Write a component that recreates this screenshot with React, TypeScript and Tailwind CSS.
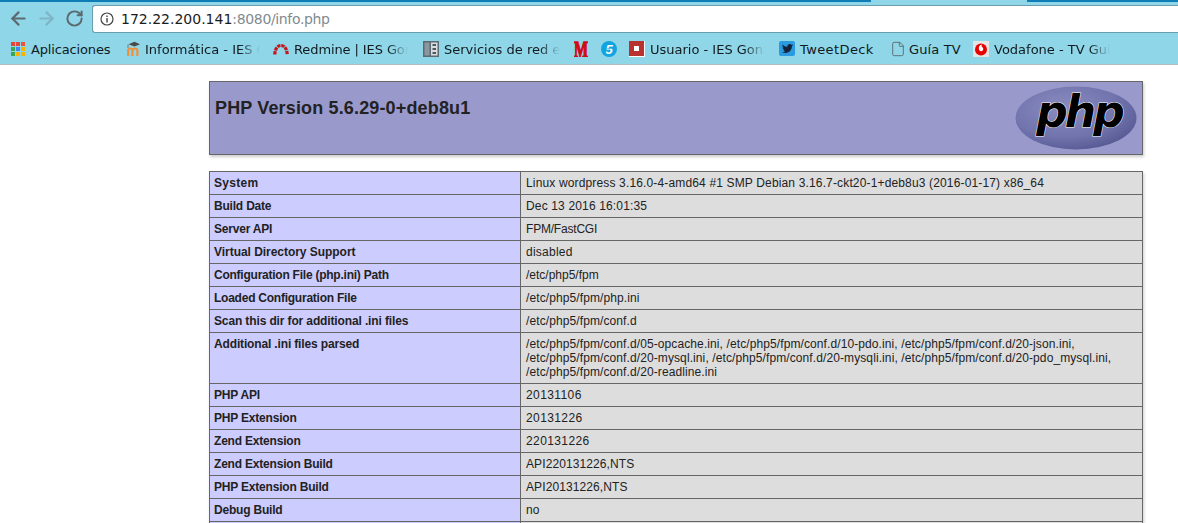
import { ArrowLeft, ArrowRight, RotateCw, File } from "lucide-react";
import { FaTwitter } from "react-icons/fa";

type Row = { label: string; lines: string[]; labelClass?: string; valueClass?: string };

// the reference text is hinted, so spacing differs a little per row
const rows: Row[] = [
  { label: "System", labelClass: "tracking-[0.3px]", valueClass: "tracking-[0.15px]", lines: ["Linux wordpress 3.16.0-4-amd64 #1 SMP Debian 3.16.7-ckt20-1+deb8u3 (2016-01-17) x86_64"] },
  { label: "Build Date", lines: ["Dec 13 2016 16:01:35"], valueClass: "tracking-[0.15px]" },
  { label: "Server API", lines: ["FPM/FastCGI"], valueClass: "tracking-[-0.2px]" },
  { label: "Virtual Directory Support", labelClass: "tracking-[-0.04px]", lines: ["disabled"], valueClass: "tracking-[0.25px]" },
  { label: "Configuration File (php.ini) Path", labelClass: "tracking-[-0.24px]", lines: ["/etc/php5/fpm"], valueClass: "tracking-[0px]" },
  { label: "Loaded Configuration File", labelClass: "tracking-[-0.24px]", lines: ["/etc/php5/fpm/php.ini"] },
  { label: "Scan this dir for additional .ini files", labelClass: "tracking-[-0.13px]", lines: ["/etc/php5/fpm/conf.d"] },
  {
    label: "Additional .ini files parsed",
    labelClass: "tracking-[-0.15px]",
    lines: [
      "/etc/php5/fpm/conf.d/05-opcache.ini, /etc/php5/fpm/conf.d/10-pdo.ini, /etc/php5/fpm/conf.d/20-json.ini,",
      "/etc/php5/fpm/conf.d/20-mysql.ini, /etc/php5/fpm/conf.d/20-mysqli.ini, /etc/php5/fpm/conf.d/20-pdo_mysql.ini,",
      "/etc/php5/fpm/conf.d/20-readline.ini",
    ],
  },
  { label: "PHP API", lines: ["20131106"], valueClass: "tracking-[0.4px]" },
  { label: "PHP Extension", lines: ["20131226"], valueClass: "tracking-[0.4px]" },
  { label: "Zend Extension", lines: ["220131226"], valueClass: "tracking-[0.4px]" },
  { label: "Zend Extension Build", lines: ["API220131226,NTS"] },
  { label: "PHP Extension Build", lines: ["API20131226,NTS"] },
  { label: "Debug Build", lines: ["no"] },
  { label: "Thread Safety", lines: ["disabled"] },
];

const fade = "overflow-hidden whitespace-nowrap pt-[2px] [mask-image:linear-gradient(to_right,black_82%,transparent)]";

function AppsIcon() {
  const colors = ["#e8453c", "#e8453c", "#e8553c", "#34a853", "#4285f4", "#f4b400", "#34a853", "#f4b400", "#f4b400"];
  return (
    <div className="grid grid-cols-3 gap-[1px] w-[14px] h-[14px] mr-[6px] shrink-0">
      {colors.map((c, i) => (
        <span key={i} className="block w-[4px] h-[4px]" style={{ backgroundColor: c }} />
      ))}
    </div>
  );
}

function MoodleIcon() {
  return (
    <svg width="16" height="16" viewBox="0 0 16 16" className="mr-[4px] shrink-0">
      <path d="M3.200 15V8M3.200 9c.8-2 3.600-2 4.200 0v6M7.400 9c.7-2 4.500-2 5 0v6" fill="none" stroke="#f0903a" strokeWidth="2.200" />
      <path d="M3.500 3.200 9.500 .8 15 3.200 9.500 5.500z" fill="#4a4a4a" />
      <path d="M3 3.500v3.500" stroke="#777" strokeWidth="1" />
    </svg>
  );
}

function RedmineIcon() {
  return (
    <svg width="16" height="16" viewBox="0 0 16 16" className="mr-[5px] shrink-0">
      <path d="M1.800 13.500C2 7.500 4.800 4.500 8 4.500s6 3 6.200 9" fill="none" stroke="#c4161c" strokeWidth="3.200" strokeDasharray="3.300 .8" />
    </svg>
  );
}

function ServersIcon() {
  return (
    <svg width="16" height="16" viewBox="0 0 16 16" className="mr-[5px] shrink-0">
      <rect x="0" y="0" width="16" height="16" fill="#5b6b72" />
      <rect x="1.500" y="1.500" width="5" height="13" fill="#8b979c" />
      <rect x="8" y="1.500" width="6.500" height="13" fill="#d8dcde" />
      <rect x="9.500" y="3" width="3.500" height="2" fill="#4c5a60" />
      <rect x="9.500" y="7" width="3.500" height="2" fill="#4c5a60" />
      <rect x="9.500" y="11" width="3.500" height="2" fill="#4c5a60" />
    </svg>
  );
}

function MarcaIcon() {
  return (
    <svg width="14" height="16" viewBox="0 0 14 16">
      <text x="0" y="16" fontFamily="Liberation Serif" fontWeight="700" fontSize="24" textLength="14" lengthAdjust="spacingAndGlyphs" fill="#d10a11" stroke="#d10a11" strokeWidth="1.300">
        M
      </text>
    </svg>
  );
}

function CincoIcon() {
  return (
    <svg width="16" height="16" viewBox="0 0 16 16">
      <circle cx="8" cy="8" r="8" fill="#12a4de" />
      <text x="8" y="12.500" textAnchor="middle" fontFamily="Liberation Sans" fontWeight="700" fontStyle="italic" fontSize="13" fill="#fff">
        5
      </text>
      <path d="M2.500 8.600 13 6.800" stroke="#12a4de" strokeWidth="0.800" />
    </svg>
  );
}

function UsuarioIcon() {
  return (
    <div className="w-[16px] h-[16px] mr-[5px] shrink-0 bg-white flex">
      <div className="w-[15px] h-[15px] bg-[#b8322f] flex items-center justify-center">
        <div className="w-[5px] h-[5px] bg-white" />
      </div>
    </div>
  );
}

function TwitterIcon() {
  return (
    <div className="w-[16px] h-[15px] mr-[5px] shrink-0 bg-[#2a9be0] rounded-[2px] flex items-center justify-center">
      <FaTwitter className="w-[11px] h-[11px] text-[#12233a]" />
    </div>
  );
}

function VodafoneIcon() {
  return (
    <div className="w-[16px] h-[16px] mr-[5px] shrink-0 bg-[#e4e4e4] flex items-center justify-center">
      <svg width="14" height="14" viewBox="0 0 14 14">
        <circle cx="7" cy="7.500" r="6" fill="#e60000" />
        <path d="M8 2.500c-2 .4-3.200 2-3.200 3.800 0 1.800 1.100 3 2.400 3 1.200 0 2.100-1 2.100-2.200 0-1.300-1-2-1.800-2.500 0-.8.300-1.600.5-2.100z" fill="#fff" />
      </svg>
    </div>
  );
}

function PhpLogo() {
  return (
    <svg width="122" height="64" viewBox="0 0 122 64" className="shrink-0">
      <defs>
        <radialGradient id="phpEllipse" cx="40%" cy="35%" r="75%">
          <stop offset="0%" stopColor="#8b8dc0" />
          <stop offset="60%" stopColor="#7174ad" />
          <stop offset="100%" stopColor="#4f528c" />
        </radialGradient>
      </defs>
      <ellipse cx="61" cy="32" rx="60.500" ry="31.500" fill="url(#phpEllipse)" />
      <text
        x="64"
        y="41"
        textAnchor="middle"
        fontFamily="DejaVu Sans"
        fontWeight="700"
        fontStyle="italic"
        fontSize="44"
        letterSpacing="-3"
        fill="#000"
        stroke="#fff"
        strokeWidth="1"
        paintOrder="stroke"
      >
        php
      </text>
    </svg>
  );
}

export default function App() {
  return (
    <div className="h-[523px] w-[1178px] overflow-hidden bg-white font-['Liberation_Sans',sans-serif]">
      {/* browser chrome */}
      <div className="h-[65px] bg-[#8fd6e8] border-b border-[#b5bcc0] flex flex-col font-['DejaVu_Sans',sans-serif]">
        <div className="h-[2px] flex shrink-0">
          <div className="w-[871px] bg-[#0f7db5]" />
          <div className="w-[156px]" />
          <div className="flex-1 bg-[#0f7db5]" />
        </div>
        <div className="h-[31px] flex items-start pt-[3px] pl-[8px]">
          <ArrowLeft className="w-[21px] h-[21px] mt-[3px] text-[#5c6a70] mr-[7px]" strokeWidth={2.5} />
          <ArrowRight className="w-[21px] h-[21px] mt-[3px] text-[#7fb5c5] mr-[8px]" strokeWidth={2.5} />
          <RotateCw className="w-[19px] h-[19px] mt-[4px] text-[#5c6a70] mr-[8px]" strokeWidth={2.5} />
          <div className="h-[28px] flex-1 flex items-center bg-white border border-[#6a9eae] border-r-0 rounded-l-[3px] pl-[7px] text-[14px] text-[#1c1c1c]">
            <svg width="14" height="14" viewBox="0 0 14 14" className="mr-[7px] shrink-0">
              <circle cx="7" cy="7" r="6" fill="none" stroke="#444" strokeWidth="1.200" />
              <rect x="6.300" y="6" width="1.400" height="4.500" fill="#444" />
              <rect x="6.300" y="3.500" width="1.400" height="1.500" fill="#444" />
            </svg>
            <span>172.22.200.141</span>
            <span className="text-[#7f8a8f] tracking-[-0.35px]">:8080/info.php</span>
          </div>
        </div>
        <div className="h-[31px] flex items-center pl-[11px] text-[13px] text-[#111a1e]">
          <div className="w-[114px] flex items-center shrink-0">
            <AppsIcon />
            <span className="pt-[2px] tracking-[-0.15px]">Aplicaciones</span>
          </div>
          <div className="w-[148px] flex items-center shrink-0">
            <MoodleIcon />
            <span className={`w-[115px] ${fade}`}>Informática - IES Gonzalo</span>
          </div>
          <div className="w-[150px] flex items-center shrink-0">
            <RedmineIcon />
            <span className={`w-[114px] ${fade} tracking-[-0.1px]`}>Redmine | IES Gonzalo</span>
          </div>
          <div className="w-[151px] flex items-center shrink-0">
            <ServersIcon />
            <span className={`w-[116px] ${fade}`}>Servicios de red e internet</span>
          </div>
          <div className="w-[27px] flex items-center shrink-0">
            <MarcaIcon />
          </div>
          <div className="w-[28px] flex items-center shrink-0">
            <CincoIcon />
          </div>
          <div className="w-[150px] flex items-center shrink-0">
            <UsuarioIcon />
            <span className={`w-[115px] ${fade}`}>Usuario - IES Gonzalo</span>
          </div>
          <div className="w-[111px] flex items-center shrink-0">
            <TwitterIcon />
            <span className="pt-[2px] tracking-[0.4px]">TweetDeck</span>
          </div>
          <div className="w-[83px] flex items-center shrink-0">
            <File className="w-[16px] h-[16px] text-[#5a6468] mr-[3px]" strokeWidth={1.3} />
            <span className="pt-[2px] tracking-[0.15px]">Guía TV</span>
          </div>
          <div className="flex items-center shrink-0">
            <VodafoneIcon />
            <span className={`w-[116px] ${fade}`}>Vodafone - TV Guía</span>
          </div>
        </div>
      </div>

      {/* phpinfo page */}
      <div className="pl-[209px] pt-[16px] text-[12px] leading-[14px] text-[#222]">
        <div className="w-[934px] h-[74px] flex justify-between bg-[#9999cc] border border-[#666] shadow-[1px_2px_3px_#ccc] px-[5px] pt-[4px]">
          <h1 className="text-[18px] leading-[36px] pt-[4px] font-bold tracking-[0.15px]">PHP Version 5.6.29-0+deb8u1</h1>
          <PhpLogo />
        </div>
        <table className="mt-[16px] w-[934px] table-fixed border-collapse shadow-[1px_2px_3px_#ccc]">
          <tbody>
            {rows.map((r) => (
              <tr key={r.label}>
                <td className={`w-[311px] border border-[#666] bg-[#ccccff] px-[4px] py-[4px] align-top font-bold ${r.labelClass ?? "tracking-[-0.2px]"}`}>{r.label}</td>
                <td className={`border border-[#666] bg-[#dddddd] px-[5px] py-[4px] align-top whitespace-nowrap ${r.valueClass ?? "tracking-[0.1px]"}`}>
                  {r.lines.map((l) => (
                    <div key={l}>{l}</div>
                  ))}
                </td>
              </tr>
            ))}
          </tbody>
        </table>
      </div>
    </div>
  );
}
